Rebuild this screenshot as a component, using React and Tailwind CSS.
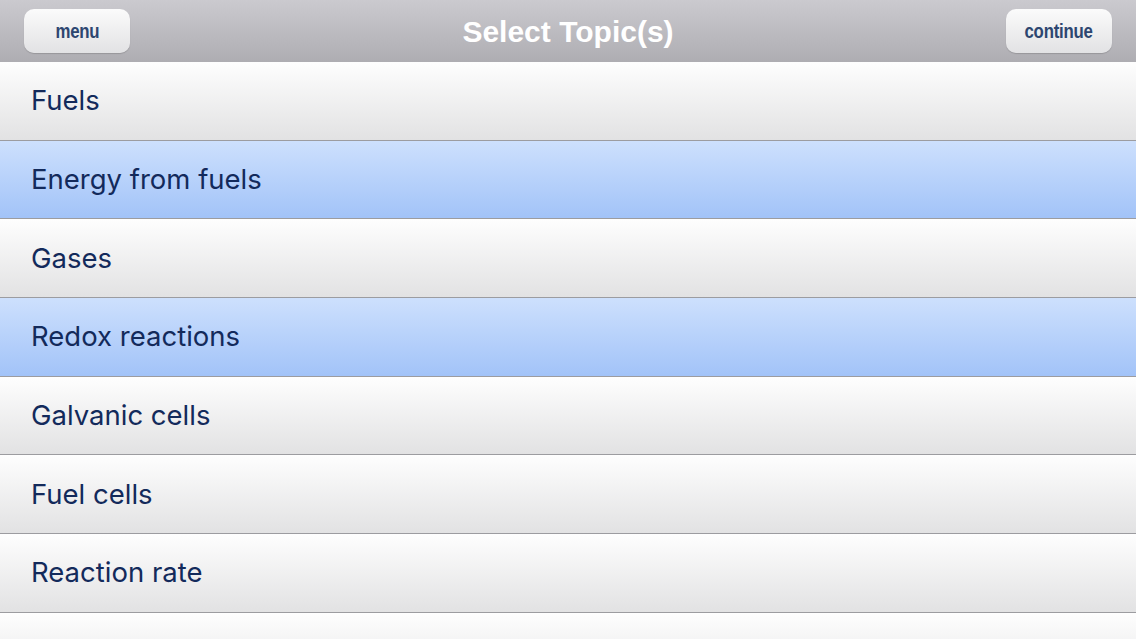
import { useState } from 'react';

const TOPICS = [
  'Fuels',
  'Energy from fuels',
  'Gases',
  'Redox reactions',
  'Galvanic cells',
  'Fuel cells',
  'Reaction rate',
];

function HeaderButton({ label }) {
  return (
    <button
      type="button"
      className="w-[106px] h-[44px] flex items-center justify-center rounded-[10px] bg-gradient-to-b from-[#fbfbfb] to-[#e2e2e4] shadow-[0_1px_1px_rgba(0,0,0,0.15)]"
    >
      <span
        className="inline-block text-[#2d4670] text-[21px] font-bold tracking-[-0.3px] scale-x-[0.8]"
        style={{ fontFamily: '"Liberation Sans Narrow", "Liberation Sans", Arial, sans-serif' }}
      >
        {label}
      </span>
    </button>
  );
}

export default function App() {
  const [selected, setSelected] = useState(['Energy from fuels', 'Redox reactions']);

  const toggle = (t) => {
    setSelected((s) => (s.includes(t) ? s.filter((x) => x !== t) : [...s, t]));
  };

  const rowBase = 'h-[78.7px] shrink-0 box-border flex items-center pl-[31px] border-b border-[#9c9ca0] cursor-pointer';

  return (
    <div
      className="w-[1136px] h-[639px] overflow-hidden flex flex-col bg-white"
      style={{ fontFamily: 'Inter, "Liberation Sans", Arial, sans-serif' }}
    >
      <div className="h-[62px] shrink-0 flex items-center justify-between px-[24px] bg-gradient-to-b from-[#cbcacf] to-[#aeadb2]">
        <HeaderButton label="menu" />
        <h1
          className="text-white text-[30px] font-bold"
          style={{ fontFamily: '"Liberation Sans", Arial, sans-serif' }}
        >
          Select Topic(s)
        </h1>
        <HeaderButton label="continue" />
      </div>

      <div className="flex flex-col">
        {TOPICS.map((t) => {
          const on = selected.includes(t);
          return (
            <div
              key={t}
              onClick={() => toggle(t)}
              className={
                on
                  ? `${rowBase} bg-gradient-to-b from-[#cde0fd] to-[#a2c3f8]`
                  : `${rowBase} bg-gradient-to-b from-[#fefefe] to-[#e2e2e3]`
              }
            >
              <span className="text-[#132a5b] text-[27.5px]">{t}</span>
            </div>
          );
        })}
        {/* next row, scrolled below the fold */}
        <div className="h-[78.7px] shrink-0 bg-gradient-to-b from-[#fefefe] to-[#e2e2e3]" />
      </div>
    </div>
  );
}
